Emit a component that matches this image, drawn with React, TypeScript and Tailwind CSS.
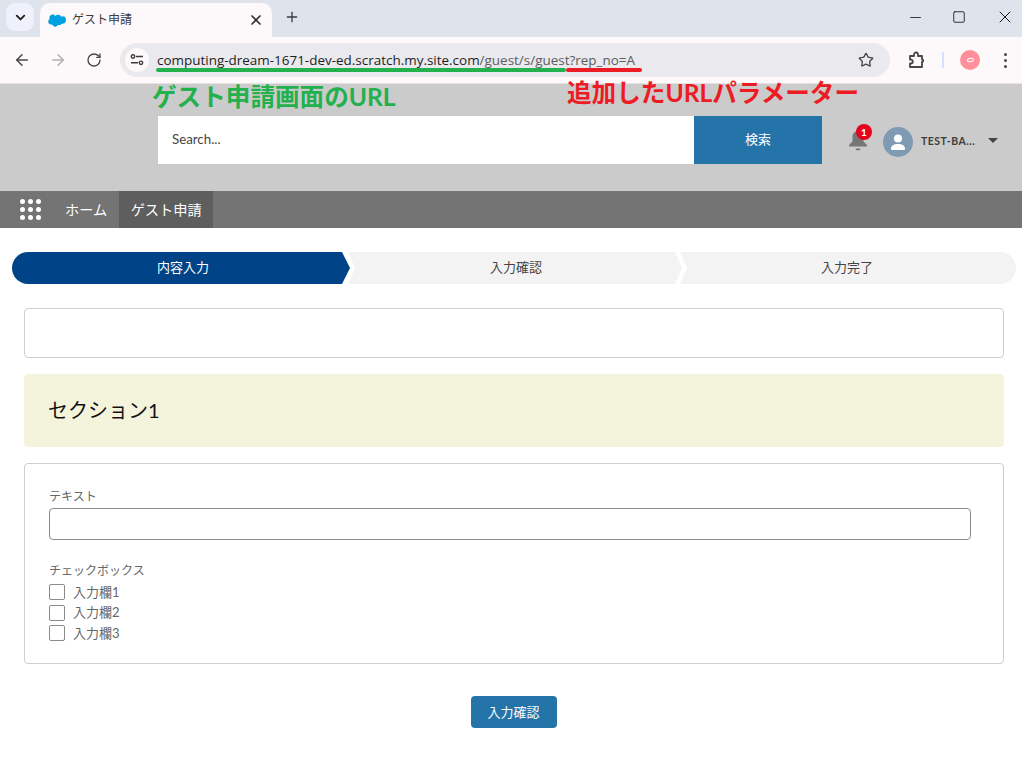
import { ArrowLeft, ArrowRight, ChevronDown, Minus, Plus, RotateCw, Square, Star, X } from "lucide-react";

const jpFont = "font-['Lato','Noto_Sans_CJK_JP',sans-serif]";

const SalesforceCloud = () => (
  <svg width="18" height="13" viewBox="0 0 18 13">
    <path
      fill="#00a1e0"
      d="M7.4 2C8.1 1.2 9 .8 10.1.8c1.4 0 2.600.8 3.200 1.900.5-.2 1-.4 1.600-.4C17 2.300 18 4 18 6s-1.500 3.800-3.500 3.800c-.3 0-.5 0-.7-.1-.5.9-1.400 1.400-2.500 1.400-.4 0-.9-.1-1.200-.3-.5 1.100-1.600 1.900-2.900 1.900s-2.500-.9-3-2.100c-.2 0-.4.100-.6.100C1.600 10.700.2 9.300.2 7.600c0-1.200.6-2.200 1.500-2.700-.2-.4-.3-.9-.3-1.300C1.400 2 2.900.6 4.600.6c1.100 0 2.100.5 2.800 1.400z"
    />
  </svg>
);

const BrowserChrome = () => (
  <div className="bg-[#dfe3ec]">
    {/* tab strip */}
    <div className="flex h-[37px] items-end">
      <div className="mb-[6px] ml-[6px] flex h-[28px] w-[28px] items-center justify-center rounded-[9px] bg-[#eef1fb]">
        <ChevronDown size={15} strokeWidth={3} className="text-[#1f1f1f]" />
      </div>
      <div className="ml-[6px] flex h-[34px] w-[232px] items-center rounded-t-[10px] bg-[#fdf8f9] pl-[8px] pr-[8px]">
        <SalesforceCloud />
        <span className={`ml-[6px] flex-1 text-[12px] text-[#3c3c3c] ${jpFont}`}>ゲスト申請</span>
        <X size={16} strokeWidth={2.500} className="text-[#303030]" />
      </div>
      <Plus size={16} strokeWidth={2} className="mb-[12px] ml-[12px] text-[#3c3c3c]" />
      <div className="flex-1" />
      <div className="mb-[10px] flex items-center text-[#1a1a1a]">
        <Minus size={17} strokeWidth={1.200} className="mr-[28px]" />
        <Square size={14} strokeWidth={1.500} className="mr-[29px]" />
        <X size={20} strokeWidth={1.200} className="mr-[7px]" />
      </div>
    </div>
    {/* toolbar */}
    <div className="flex h-[47px] items-center border-b border-[#e6e1e3] bg-[#fdf8f9] pl-[13px]">
      <ArrowLeft size={18} strokeWidth={2} className="text-[#474747]" />
      <ArrowRight size={18} strokeWidth={2} className="ml-[18px] text-[#b0b0b0]" />
      <RotateCw size={16} strokeWidth={2} className="ml-[19px] text-[#474747]" />
      <div className="relative ml-[18px] flex h-[34px] w-[770px] items-center rounded-full bg-[#e9e9ee] pl-[5px] pr-[16px]">
        <div className="flex h-[24px] w-[24px] items-center justify-center rounded-full bg-[#fdf8f9]">
          <svg width="14" height="12" viewBox="0 0 14 12" fill="none" stroke="#3c3c3c" strokeWidth="1.4">
            <circle cx="3" cy="2.5" r="1.700" />
            <path d="M6 2.500h7M1 8.800h7" />
            <circle cx="11" cy="8.800" r="1.700" />
          </svg>
        </div>
        <div className="ml-[8px] flex-1 font-['Open_Sans',sans-serif] text-[13.460px] text-[#5c5c60]">
          <span className="text-[#1f1f1f]">computing-dream-1671-dev-ed.scratch.my.site.com</span>/guest/s/guest?rep_no=A
        </div>
        <Star size={16} strokeWidth={2} className="text-[#474747]" />
        {/* annotation underlines */}
        <div className="absolute left-[36px] top-[25px] h-[4px] w-[410px] rounded-full bg-[#22b14c]" />
        <div className="absolute left-[446px] top-[25px] h-[4px] w-[76px] rounded-full bg-[#ed1c24]" />
      </div>
      <svg width="18" height="18" viewBox="0 0 18 18" fill="none" stroke="#474747" strokeWidth="1.800" strokeLinejoin="round" className="ml-[18px]">
        <path d="M2 5h4V3.500a2 2 0 0 1 4 0V5h4v3.500h.5a1.500 1.500 0 0 1 0 2.500H14v5H2v-3.500h.8a2 2 0 0 0 0-4H2z" />
      </svg>
      <div className="ml-[16px] h-[16px] w-[2px] bg-[#d3e3fd]" />
      <div className="ml-[16px] flex h-[20px] w-[20px] items-center justify-center rounded-full bg-[#ff8f9b]">
        <div className="h-[4px] w-[7px] -rotate-12 rounded-full border border-white" />
      </div>
      <div className="ml-[24px] flex flex-col gap-[3px]">
        <div className="h-[3px] w-[3px] rounded-full bg-[#474747]" />
        <div className="h-[3px] w-[3px] rounded-full bg-[#474747]" />
        <div className="h-[3px] w-[3px] rounded-full bg-[#474747]" />
      </div>
    </div>
  </div>
);

const SiteHeader = () => (
  <div className="relative flex h-[107px] items-start bg-[#cbcbcb] pl-[158px] pt-[32px]">
    <span className={`absolute left-[152px] top-[-2px] text-[24.600px] font-bold leading-[30px] text-[#22b14c] ${jpFont}`}>
      ゲスト申請画面のURL
    </span>
    <span className={`absolute left-[567px] top-[-6px] text-[24.600px] font-bold leading-[30px] text-[#ed1c24] ${jpFont}`}>
      追加したURLパラメーター
    </span>
    <div className="flex h-[48px] w-[536px] items-center bg-white pl-[14px] font-['Lato',sans-serif] text-[13.300px] text-[#444]">
      Search...
    </div>
    <div className={`flex h-[48px] w-[128px] items-center justify-center bg-[#2574a9] text-[13px] text-white ${jpFont}`}>
      検索
    </div>
    <div className="relative ml-[26px] mt-[14px] h-[22px] w-[20px]">
      <svg width="20" height="21" viewBox="0 0 20 21" fill="#767676">
        <path d="M10 1c-3.500 0-5.500 2.500-5.500 6v4.500L1 15v1.500h18V15l-3.500-3.500V7C15.500 3.500 13.500 1 10 1z" />
        <path d="M7.500 18.500h5c0 1-1.100 2-2.500 2s-2.500-1-2.500-2z" />
      </svg>
      <div className="absolute left-[8px] top-[-6px] flex h-[16px] w-[16px] items-center justify-center rounded-full bg-[#e8001c] font-['Lato',sans-serif] text-[10px] font-bold text-white">
        1
      </div>
    </div>
    <div className="ml-[15px] mt-[11px] flex h-[30px] w-[30px] items-center justify-center rounded-full bg-[#7f9ab3]">
      <svg width="18" height="18" viewBox="0 0 18 18" fill="white">
        <circle cx="9" cy="5.500" r="4" />
        <path d="M2 16c0-3.500 2.500-5 7-5s7 1.500 7 5c0 .6-.4 1-1 1H3c-.6 0-1-.4-1-1z" />
      </svg>
    </div>
    <span className="ml-[8px] mt-[18px] font-['Lato',sans-serif] text-[10.500px] font-bold leading-[15px] tracking-[0.5px] text-[#3e3e3c]">
      TEST-BA...
    </span>
    <div className="ml-[13px] mt-[22px] h-0 w-0 border-x-[5px] border-t-[5px] border-x-transparent border-t-[#444]" />
  </div>
);

const NavBar = () => (
  <div className={`flex h-[37px] items-stretch bg-[#747474] text-[14.200px] text-white ${jpFont}`}>
    <div className="ml-[20px] grid w-[21px] grid-cols-3 content-center gap-[3px]">
      {[...Array(9)].map((_, i) => (
        <div key={i} className="h-[5px] w-[5px] rounded-full bg-white" />
      ))}
    </div>
    <div className="ml-[24px] flex items-center">ホーム</div>
    <div className="ml-[12px] flex w-[94px] items-center justify-center bg-[#5e5e5e]">ゲスト申請</div>
  </div>
);

const PathSteps = () => (
  <div className={`flex h-[32px] pl-[12px] pr-[6px] text-[13px] ${jpFont}`}>
    <div className="flex w-[338px] items-center justify-center rounded-l-full bg-[#004487] pb-[1px] pl-[4px] text-white [clip-path:polygon(0_0,calc(100%-8px)_0,100%_50%,calc(100%-8px)_100%,0_100%)]">
      内容入力
    </div>
    <div className="-ml-[2px] flex w-[334px] items-center justify-center bg-[#f3f3f3] pb-[1px] pl-[2px] text-[#444] [clip-path:polygon(0_0,calc(100%-7px)_0,100%_50%,calc(100%-7px)_100%,0_100%,7px_50%)]">
      入力確認
    </div>
    <div className="-ml-[2px] flex w-[336px] items-center justify-center rounded-r-full bg-[#f3f3f3] pb-[1px] pr-[2px] text-[#444] [clip-path:polygon(0_0,100%_0,100%_100%,0_100%,7px_50%)]">
      入力完了
    </div>
  </div>
);

const CheckItem = ({ label }: { label: string }) => (
  <div className="flex h-[20.500px] items-center">
    <div className="h-[16px] w-[16px] rounded-[2px] border border-[#8a8a8a] bg-white" />
    <span className="ml-[8px] text-[13px] text-[#666]">{label}</span>
  </div>
);

export default function App() {
  return (
    <div className={`h-[757px] w-[1022px] overflow-hidden bg-white ${jpFont}`}>
      <BrowserChrome />
      <SiteHeader />
      <NavBar />
      <div className="pt-[24px]">
        <PathSteps />
        <div className="mx-[24px] mt-[24px] flex w-[980px] flex-col gap-[16px]">
          <div className="h-[50px] rounded-[4px] border border-[#cfcfcf]" />
          <div className="flex h-[73px] items-center rounded-[4px] bg-[#f4f4dc] pb-[2px] pl-[24px] text-[20px] text-[#111]">
            セクション1
          </div>
          <div className="h-[201px] rounded-[4px] border border-[#cfcfcf] px-[24px] pt-[24px]">
            <div className="text-[12px] leading-[18px] text-[#666]">テキスト</div>
            <div className="mt-[2px] h-[32px] w-[922px] rounded-[4px] border border-[#8a8a8a]" />
            <div className="mt-[22px] text-[12px] leading-[18px] text-[#666]">チェックボックス</div>
            <div className="mt-[2px]">
              <CheckItem label="入力欄1" />
              <CheckItem label="入力欄2" />
              <CheckItem label="入力欄3" />
            </div>
          </div>
        </div>
        <div className="mt-[32px] flex justify-center pl-[5px]">
          <div className="flex h-[32px] w-[86px] items-center justify-center rounded-[4px] bg-[#2574a9] pt-[1px] text-[13px] text-white">
            入力確認
          </div>
        </div>
      </div>
    </div>
  );
}
